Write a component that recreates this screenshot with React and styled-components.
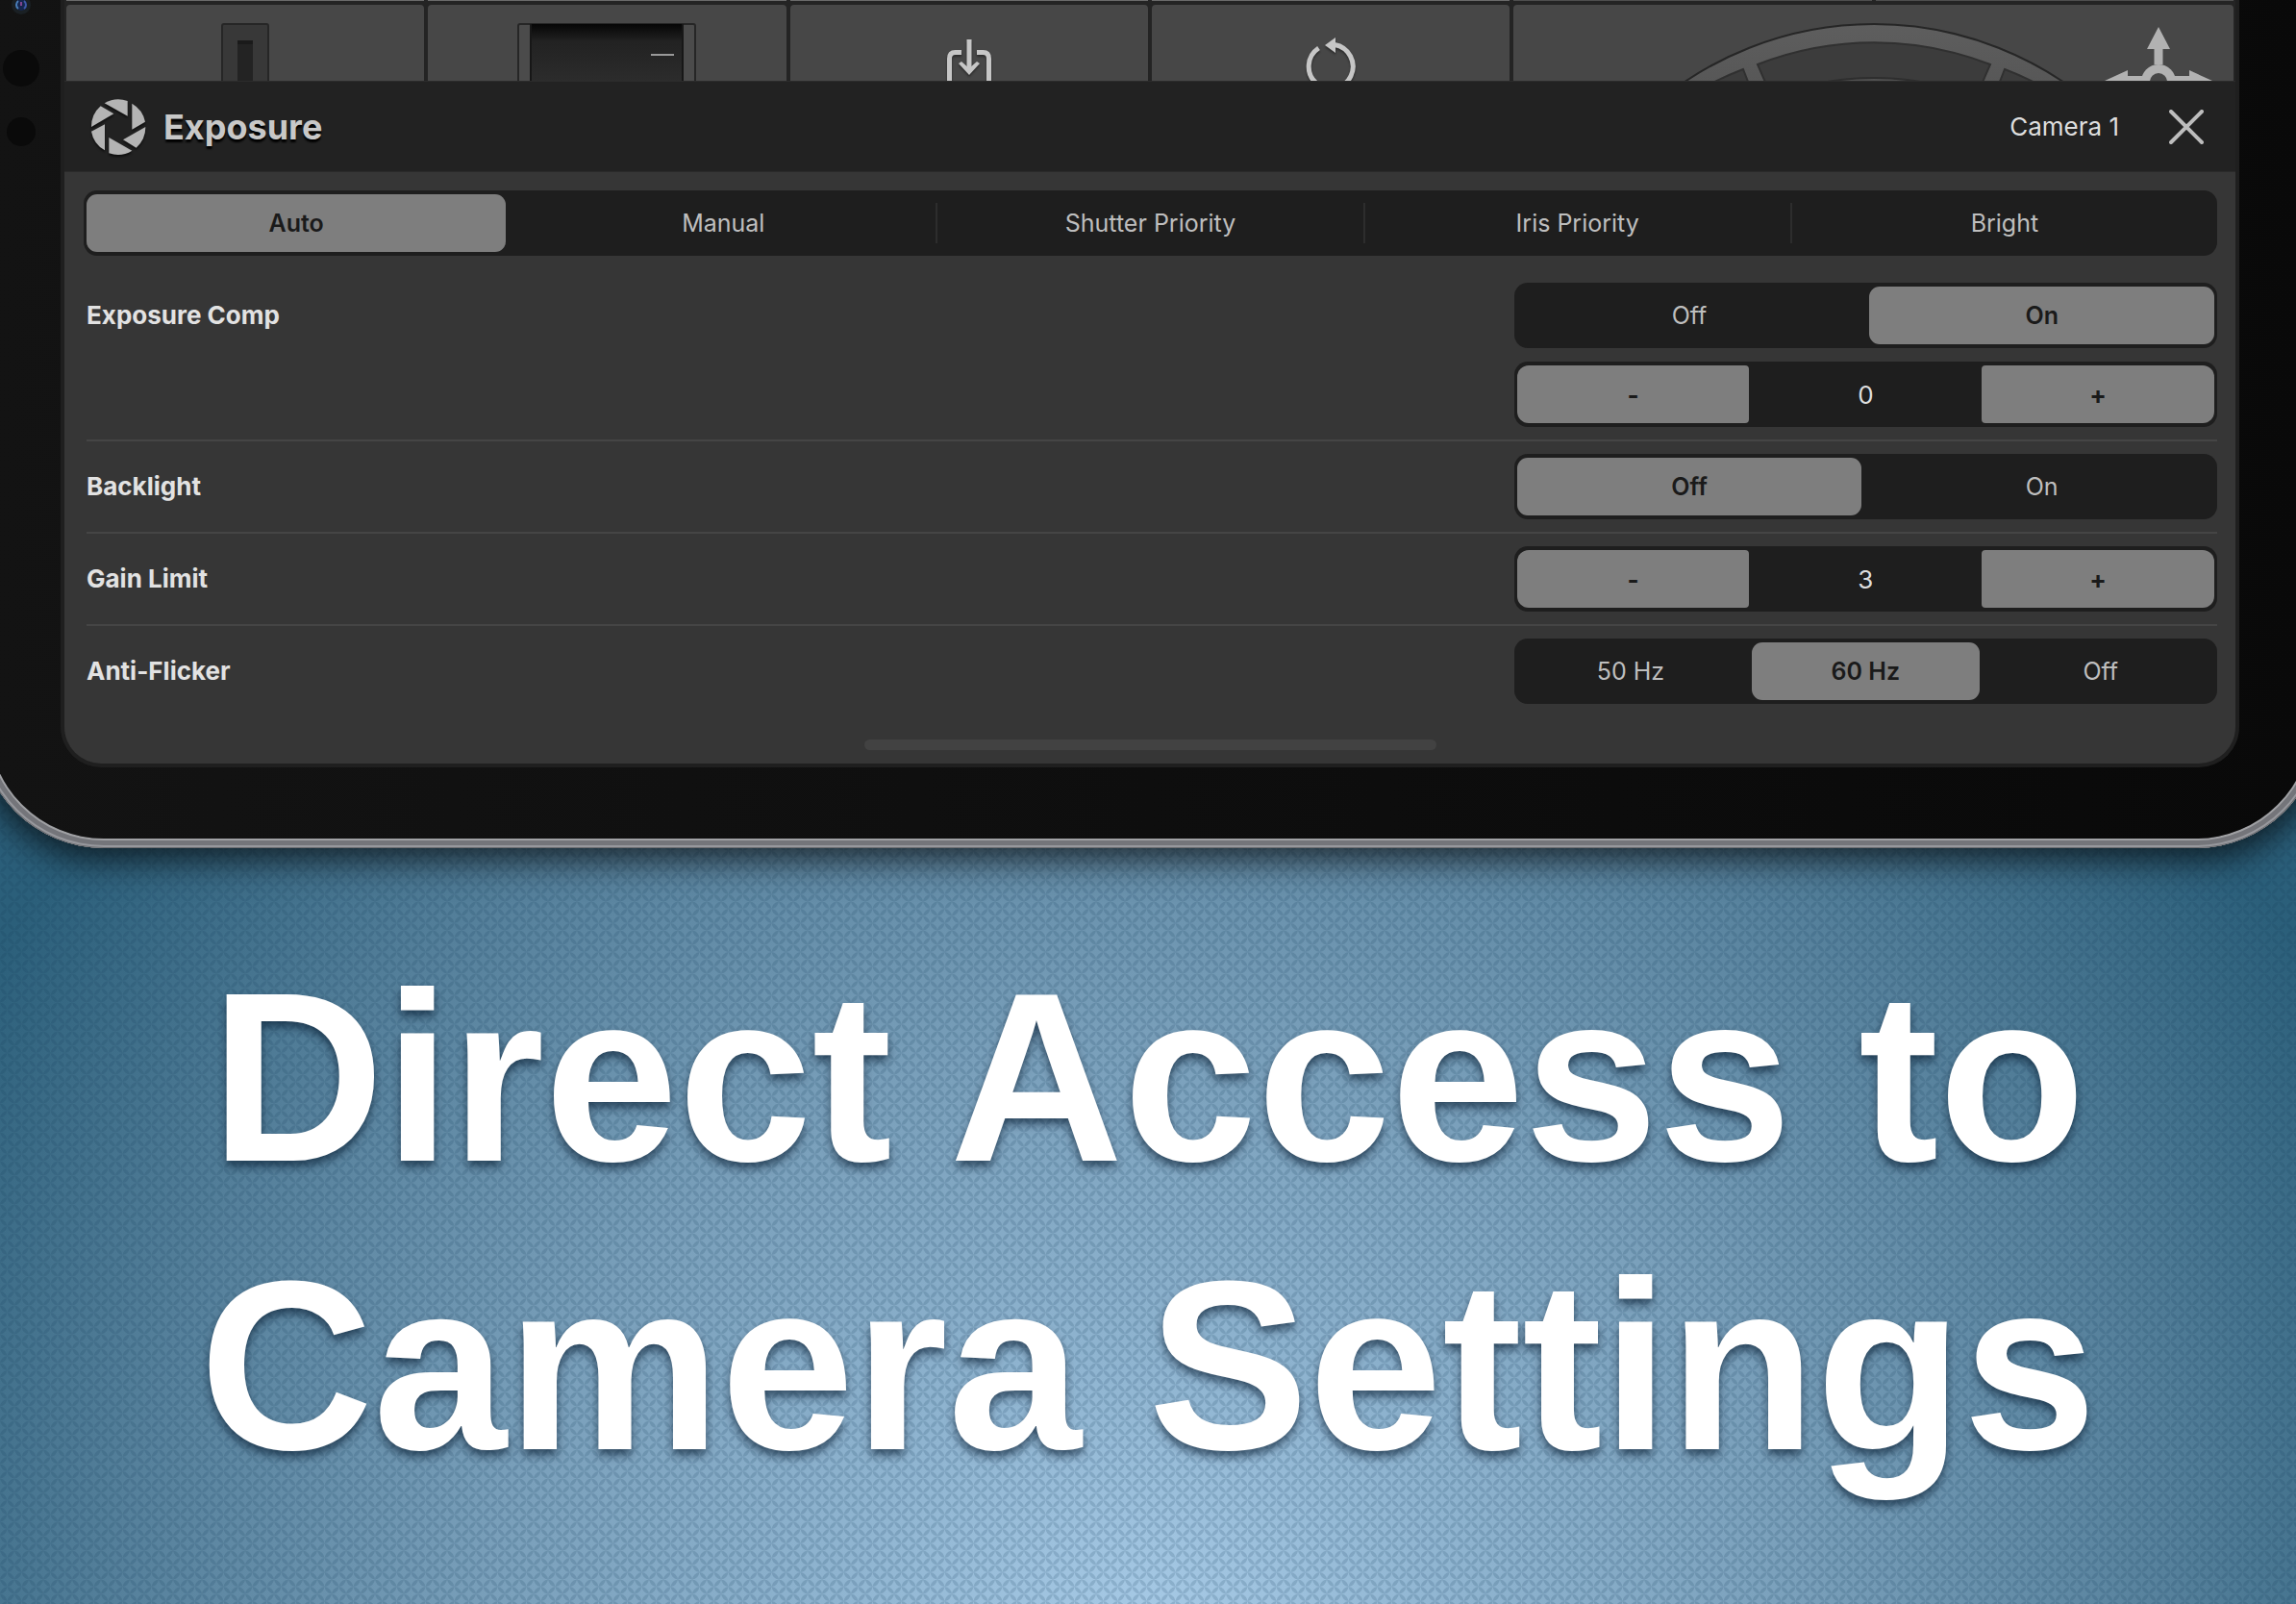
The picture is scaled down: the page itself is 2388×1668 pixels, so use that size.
import React, { useState } from "react"
import styled, { createGlobalStyle } from "styled-components"

const GlobalStyle = createGlobalStyle`
* {
  box-sizing: border-box;
}

body {
  margin: 0;
  background-color: #2f6480;
  font-family: Inter, "Liberation Sans", sans-serif;
}

button {
  font-family: inherit;
  cursor: pointer;
}
`

function Segmented({ label, options, value, onChange }) {
  const selected = options.indexOf(value)

  return (
    <Track role="group" aria-label={label}>
      {options.map((option, i) => (
        <React.Fragment key={option}>
          {i > 0 && <Divider $hidden={i === selected || i - 1 === selected} />}
          <Segment
            type="button"
            $active={i === selected}
            aria-pressed={i === selected}
            onClick={() => onChange(option)}
          >
            {option}
          </Segment>
        </React.Fragment>
      ))}
    </Track>
  )
}

function Stepper({ label, value, onChange }) {
  return (
    <Track role="group" aria-label={label}>
      <StepButton type="button" $side="left" onClick={() => onChange(value - 1)}>-</StepButton>
      <StepValue>{value}</StepValue>
      <StepButton type="button" $side="right" onClick={() => onChange(value + 1)}>+</StepButton>
    </Track>
  )
}

function ApertureIcon() {
  return (
    <ApertureSvg viewBox="44 37 174 174" aria-hidden="true">
      <path d="M88 50A85 85 0 0 1 160 43V90Z" />
      <path d="M174 51A85 85 0 0 1 215 108L174 132Z" />
      <path d="M216 124A85 85 0 0 1 187 189L146 164Z" />
      <path d="M174 198A85 85 0 0 1 102 206V157Z" />
      <path d="M89 197A85 85 0 0 1 47 138L89 116Z" />
      <path d="M47 124A85 85 0 0 1 76 59L117 83Z" />
    </ApertureSvg>
  )
}

function Sensors() {
  return (
    <svg width="75" height="160" viewBox="-12 0 75 160" aria-hidden="true">
      <circle cx="22" cy="5" r="10" fill="#1a2024" />
      <circle cx="22" cy="5" r="6" fill="#16264e" />
      <path d="M19 1a5 5 0 0 0 0 8" stroke="#4a7fb8" strokeWidth="2" fill="none" />
      <path d="M25 1a5 5 0 0 1 0 8" stroke="#3d5aa8" strokeWidth="2" fill="none" />
      <path d="M22 2v4" stroke="#80448f" strokeWidth="2" />
      <circle cx="22" cy="71" r="19" fill="#0a0a0a" />
      <circle cx="22" cy="137" r="15" fill="#0a0a0a" />
    </svg>
  )
}

function SliderDrawing() {
  return (
    <svg width="50" height="60" viewBox="0 0 50 60" aria-hidden="true">
      <rect x="1" y="1" width="48" height="70" rx="2" fill="#383838" stroke="#262626" strokeWidth="2" />
      <rect x="17" y="18" width="16" height="50" fill="#232323" />
      <rect x="17" y="18" width="16" height="4" fill="#1a1a1a" />
    </svg>
  )
}

function DialDrawing() {
  return (
    <svg width="186" height="60" viewBox="0 0 186 60" aria-hidden="true">
      <defs>
        <linearGradient id="dial" x1="0" y1="0" x2="0" y2="1">
          <stop offset="0" stopColor="#050505" />
          <stop offset="0.3" stopColor="#222222" />
          <stop offset="1" stopColor="#2c2c2c" />
        </linearGradient>
      </defs>
      <rect x="1" y="1" width="184" height="70" rx="2" fill="#4b4b4b" stroke="#262626" strokeWidth="2" />
      <rect x="13" y="1" width="160" height="60" fill="url(#dial)" />
      <rect x="13" y="1" width="2" height="60" fill="#171717" />
      <rect x="171" y="1" width="2" height="60" fill="#171717" />
      <rect x="139" y="32" width="24" height="2" fill="#999999" />
    </svg>
  )
}

function SaveIcon() {
  return (
    <KeySvg width="50" height="43" viewBox="0 0 50 43" aria-hidden="true">
      <path d="M17 13.5H10.500Q4.500 13.500 4.500 20V46" fill="none" stroke="#c6c6c6" strokeWidth="5" />
      <path d="M33 13.5H39.500Q45.500 13.500 45.500 20V46" fill="none" stroke="#c6c6c6" strokeWidth="5" />
      <path d="M25 0V32" fill="none" stroke="#c6c6c6" strokeWidth="5" />
      <path d="M14 25L17 23L25 30L33 23L36 25L25 37Z" fill="#c6c6c6" />
    </KeySvg>
  )
}

function RotateIcon() {
  return (
    <KeySvg width="56" height="47" viewBox="0 0 56 47" aria-hidden="true">
      <path d="M15.500 12A23 23 0 1 0 32 8.500" fill="none" stroke="#c6c6c6" strokeWidth="5" />
      <path d="M22 9L33 1V17Z" fill="#c6c6c6" />
    </KeySvg>
  )
}

function WheelDrawing() {
  return (
    <svg width="750" height="79" viewBox="1574 5 750 79" aria-hidden="true">
      <defs>
        <linearGradient id="rim" x1="0" y1="0" x2="0" y2="1">
          <stop offset="0" stopColor="#5e5e5e" />
          <stop offset="0.15" stopColor="#525252" />
          <stop offset="1" stopColor="#525252" />
        </linearGradient>
      </defs>
      <circle cx="1949" cy="377" r="352" fill="url(#rim)" stroke="#262626" strokeWidth="2" />
      <g fill="#3c3c3c" stroke="#303030" strokeWidth="2">
        <path d="M1828 67A333 333 0 0 1 2070 67L2060 90H1838Z" />
        <path d="M1813 72L1820 90H1774Q1792 80 1813 72Z" />
        <path d="M2085 72L2078 90H2124Q2106 80 2085 72Z" />
      </g>
      <circle cx="1949" cy="377" r="296" fill="#505050" stroke="#2e2e2e" strokeWidth="2" />
      <g fill="#b2b2b2">
        <path d="M2245 28L2257 51H2249.500V67H2240.500V51H2233Z" />
        <path d="M2189 84L2213 73V79H2232V90H2189Z" />
        <path d="M2301 84L2277 73V79H2258V90H2301Z" />
        <circle cx="2245" cy="85" r="18" />
      </g>
      <circle cx="2245" cy="85" r="9" fill="#474747" />
    </svg>
  )
}

function App() {
  const [mode, setMode] = useState("Auto")
  const [comp, setComp] = useState("On")
  const [compLevel, setCompLevel] = useState(0)
  const [backlight, setBacklight] = useState("Off")
  const [gain, setGain] = useState(3)
  const [flicker, setFlicker] = useState("60 Hz")

  return (
    <Page>
      <GlobalStyle />
      <Device>
        <Bezel>
          <Sensors />
          <Screen>
            <Deck>
              <DeckEdge $light />
              <DeckEdge $light />
              <DeckEdge $light />
              <DeckEdge $light />
              <DeckEdge />
              <DeckEdge />
              <Pad $top={19}><SliderDrawing /></Pad>
              <Pad $top={19}><DialDrawing /></Pad>
              <Pad $top={36}><SaveIcon /></Pad>
              <Pad $top={33}><RotateIcon /></Pad>
              <Pad $top={0} $wide><WheelDrawing /></Pad>
            </Deck>

            <Header>
              <ApertureIcon />
              <Title>Exposure</Title>
              <CameraName>Camera 1</CameraName>
              <CloseButton type="button" aria-label="Close">
                <svg width="36" height="36" viewBox="0 0 36 36" aria-hidden="true">
                  <path d="M2 2L34 34M34 2L2 34" stroke="#bdbdbd" strokeWidth="4" strokeLinecap="round" />
                </svg>
              </CloseButton>
            </Header>

            <Settings>
              <Segmented
                label="Exposure mode"
                options={["Auto", "Manual", "Shutter Priority", "Iris Priority", "Bright"]}
                value={mode}
                onChange={setMode}
              />
              <Rows>
                <Row>
                  <RowLabel>Exposure Comp</RowLabel>
                  <Controls>
                    <Segmented label="Exposure Comp" options={["Off", "On"]} value={comp} onChange={setComp} />
                    <Stepper label="Exposure Comp level" value={compLevel} onChange={setCompLevel} />
                  </Controls>
                </Row>
                <Row>
                  <RowLabel>Backlight</RowLabel>
                  <Controls>
                    <Segmented label="Backlight" options={["Off", "On"]} value={backlight} onChange={setBacklight} />
                  </Controls>
                </Row>
                <Row>
                  <RowLabel>Gain Limit</RowLabel>
                  <Controls>
                    <Stepper label="Gain Limit" value={gain} onChange={setGain} />
                  </Controls>
                </Row>
                <Row>
                  <RowLabel>Anti-Flicker</RowLabel>
                  <Controls>
                    <Segmented label="Anti-Flicker" options={["50 Hz", "60 Hz", "Off"]} value={flicker} onChange={setFlicker} />
                  </Controls>
                </Row>
              </Rows>
              <HomeIndicator />
            </Settings>
          </Screen>
        </Bezel>
      </Device>

      <Headline>
        Direct Access to
        <br />
        Camera Settings
      </Headline>
    </Page>
  )
}

export default App

const weave = encodeURIComponent(
  `<svg xmlns="http://www.w3.org/2000/svg" width="15" height="15"><g fill="#12395a" fill-opacity="0.17"><path d="M7.500 0Q14 1 15 7.500Q8.500 6.500 7.500 0Z"/><path d="M15 7.500Q14 14 7.500 15Q8.500 8.500 15 7.500Z"/><path d="M7.500 15Q1 14 0 7.500Q6.500 8.500 7.500 15Z"/><path d="M0 7.500Q1 1 7.500 0Q6.500 6.500 0 7.500Z"/></g></svg>`
)

const Page = styled.main`
display: flex;
flex-direction: column;
min-height: 100vh;
overflow: hidden;
background-image:
  url("data:image/svg+xml,${weave}"),
  radial-gradient(ellipse 60% 80% at 50% 103%, #a9cce8 0%, #90b5d1 22%, #799fba 48%, #55809b 75%, #2b5f7a 100%);
`

const Device = styled.section`
margin: 0 -26px 0 -22px;
padding: 0 10px 10px;
border-radius: 0 0 130px 130px;
background-color: #74757a;
box-shadow: 0 8px 36px 4px rgba(0, 0, 0, 0.7), inset 0 0 0 1px #6a6b6f, inset 0 0 0 3px #97989d, inset 0 0 0 8px #74757a, inset 0 0 0 10px #a0a1a4;
`

const Bezel = styled.div`
display: flex;
padding: 0 75px 74px 0;
border-radius: 0 0 120px 120px;
background: linear-gradient(to right, #131313, #090909);

> svg {
  flex: none;
}
`

const Screen = styled.div`
flex: 1;
min-width: 0;
overflow: hidden;
border: 4px solid #1f1f1f;
border-top: 0;
border-radius: 0 0 42px 42px;
background-color: #363636;
`

const Deck = styled.div`
display: grid;
grid-template-columns: repeat(6, 1fr);
grid-template-rows: 1px 79px;
gap: 4px;
padding: 0 2px;
background-color: #242424;
`

const DeckEdge = styled.div`
background-color: ${(props) => (props.$light ? "#6a6a6a" : "#4e4e4e")};
`

const Pad = styled.div`
display: flex;
justify-content: center;
align-items: flex-start;
min-width: 0;
overflow: hidden;
grid-column: span ${(props) => (props.$wide ? 2 : 1)};
padding-top: ${(props) => props.$top}px;
border-radius: 4px 4px 0 0;
background-color: #474747;

svg {
  flex: none;
}
`

const KeySvg = styled.svg`
filter: drop-shadow(0 2px 1px rgba(0, 0, 0, 0.4));
`

const Header = styled.header`
display: flex;
align-items: center;
height: 95px;
padding: 0 33px 0 27px;
border-top: 1px solid #2b2b2b;
border-bottom: 1px solid #2a2a2a;
background-color: #222222;
`

const ApertureSvg = styled.svg`
width: 58px;
height: 58px;
fill: #b4b4b4;
filter: drop-shadow(0 2px 1px rgba(0, 0, 0, 0.6));
`

const Title = styled.h2`
flex: 1;
margin: 0 0 0 18px;
font-size: 36px;
font-weight: 700;
color: #c8c8c8;
text-shadow: 0 3px 2px #000000;
`

const CameraName = styled.span`
font-size: 26px;
color: #dedede;
`

const CloseButton = styled.button`
display: flex;
margin-left: 52px;
padding: 0;
border: 0;
background: none;
`

const Settings = styled.div`
padding: 19px 19px 14px 20px;
`

const Track = styled.div`
display: flex;
width: 100%;
height: 68px;
padding: 4px 3px;
border-radius: 14px;
background-color: #1e1e1e;
`

const Segment = styled.button`
flex: 1 1 0;
min-width: 0;
padding: 0;
border: 0;
border-radius: 11px;
background-color: ${(props) => (props.$active ? "#7e7e7e" : "transparent")};
font-size: 25px;
font-weight: ${(props) => (props.$active ? 600 : 400)};
color: ${(props) => (props.$active ? "#1a1a1a" : "#bebebe")};
`

const Divider = styled.span`
flex: none;
width: 2px;
margin: 9px 3px;
background-color: ${(props) => (props.$hidden ? "transparent" : "#2d2d2d")};
`

const StepButton = styled.button`
flex: 1 1 0;
padding: 0;
border: 0;
border-radius: ${(props) => (props.$side === "left" ? "12px 4px 4px 12px" : "4px 12px 12px 4px")};
background-color: #7e7e7e;
font-size: 26px;
font-weight: 700;
color: #1a1a1a;
`

const StepValue = styled.output`
flex: 1 1 0;
display: flex;
align-items: center;
justify-content: center;
font-size: 26px;
color: #dedede;
`

const Rows = styled.div`
margin: 15px 0 0 3px;
`

const Row = styled.div`
display: flex;
justify-content: space-between;
padding: 13px 0;

& + & {
  border-top: 2px solid #454545;
}
`

const RowLabel = styled.span`
font-size: 26px;
font-weight: 700;
line-height: 68px;
color: #e2e2e2;
`

const Controls = styled.div`
display: flex;
flex-direction: column;
gap: 14px;
width: 33%;
`

const HomeIndicator = styled.div`
width: 595px;
height: 11px;
margin: 24px auto 0;
border-radius: 6px;
background-color: #424242;
`

const Headline = styled.h1`
margin: 0;
padding: 89px 0 0;
font-family: "Liberation Sans", Arial, sans-serif;
font-size: 250px;
font-weight: 700;
line-height: 300px;
text-align: center;
color: #ffffff;
text-shadow: 0 6px 10px rgba(0, 20, 40, 0.6);
`
